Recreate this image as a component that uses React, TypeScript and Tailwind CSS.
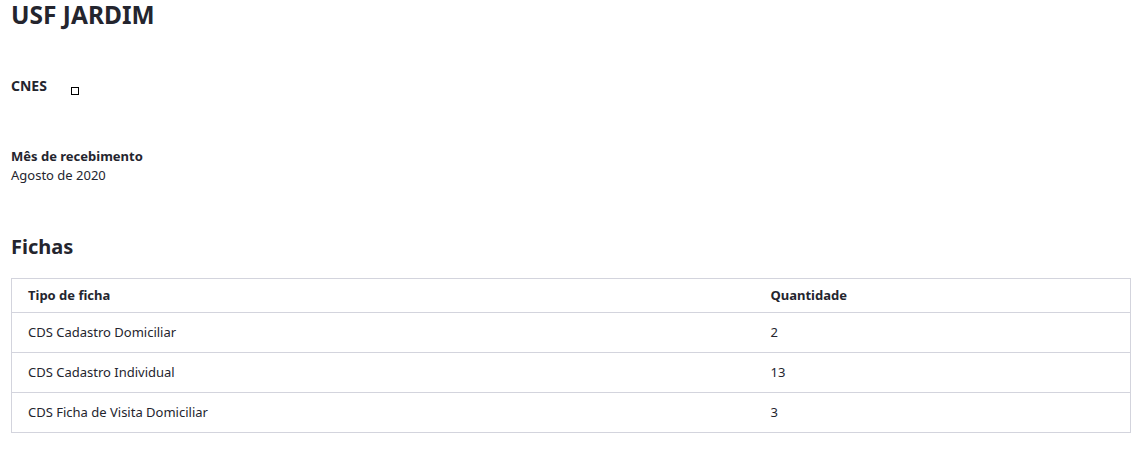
const rows = [
  { tipo: "CDS Cadastro Domiciliar", qtd: 2 },
  { tipo: "CDS Cadastro Individual", qtd: 13 },
  { tipo: "CDS Ficha de Visita Domiciliar", qtd: 3 },
];

export default function App() {
  return (
    <div
      className="min-h-[451px] bg-white pl-[11px] pr-[12px] text-[#24252e]"
      style={{ fontFamily: '"Noto Sans", "Open Sans", sans-serif' }}
    >
      <h1 className="text-[24.5px] font-bold leading-[30px]">USF JARDIM</h1>

      <div className="mt-[46px] flex items-start">
        <span className="text-[14px] font-bold leading-[20px]">CNES</span>
        <span className="ml-[24px] mt-[11px] block h-[8px] w-[8px] border border-black" />
      </div>

      <div className="mt-[50px]">
        <div className="text-[13px] font-bold leading-[20px]">Mês de recebimento</div>
        <div className="text-[13px] leading-[18px]">Agosto de 2020</div>
      </div>

      <h2 className="mt-[50px] text-[20px] font-bold leading-[26px]">Fichas</h2>

      <table className="mt-[18px] w-full border-collapse border border-[#d3d4dd] text-[13px]">
        <thead>
          <tr className="h-[34px]">
            <th className="w-[743px] border-b border-[#d3d4dd] px-4 text-left font-bold">Tipo de ficha</th>
            <th className="border-b border-[#d3d4dd] px-4 text-left font-bold">Quantidade</th>
          </tr>
        </thead>
        <tbody>
          {rows.map((r) => (
            <tr key={r.tipo} className="h-[40px] border-b border-[#d3d4dd]">
              <td className="px-4">{r.tipo}</td>
              <td className="px-4">{r.qtd}</td>
            </tr>
          ))}
        </tbody>
      </table>
    </div>
  );
}
